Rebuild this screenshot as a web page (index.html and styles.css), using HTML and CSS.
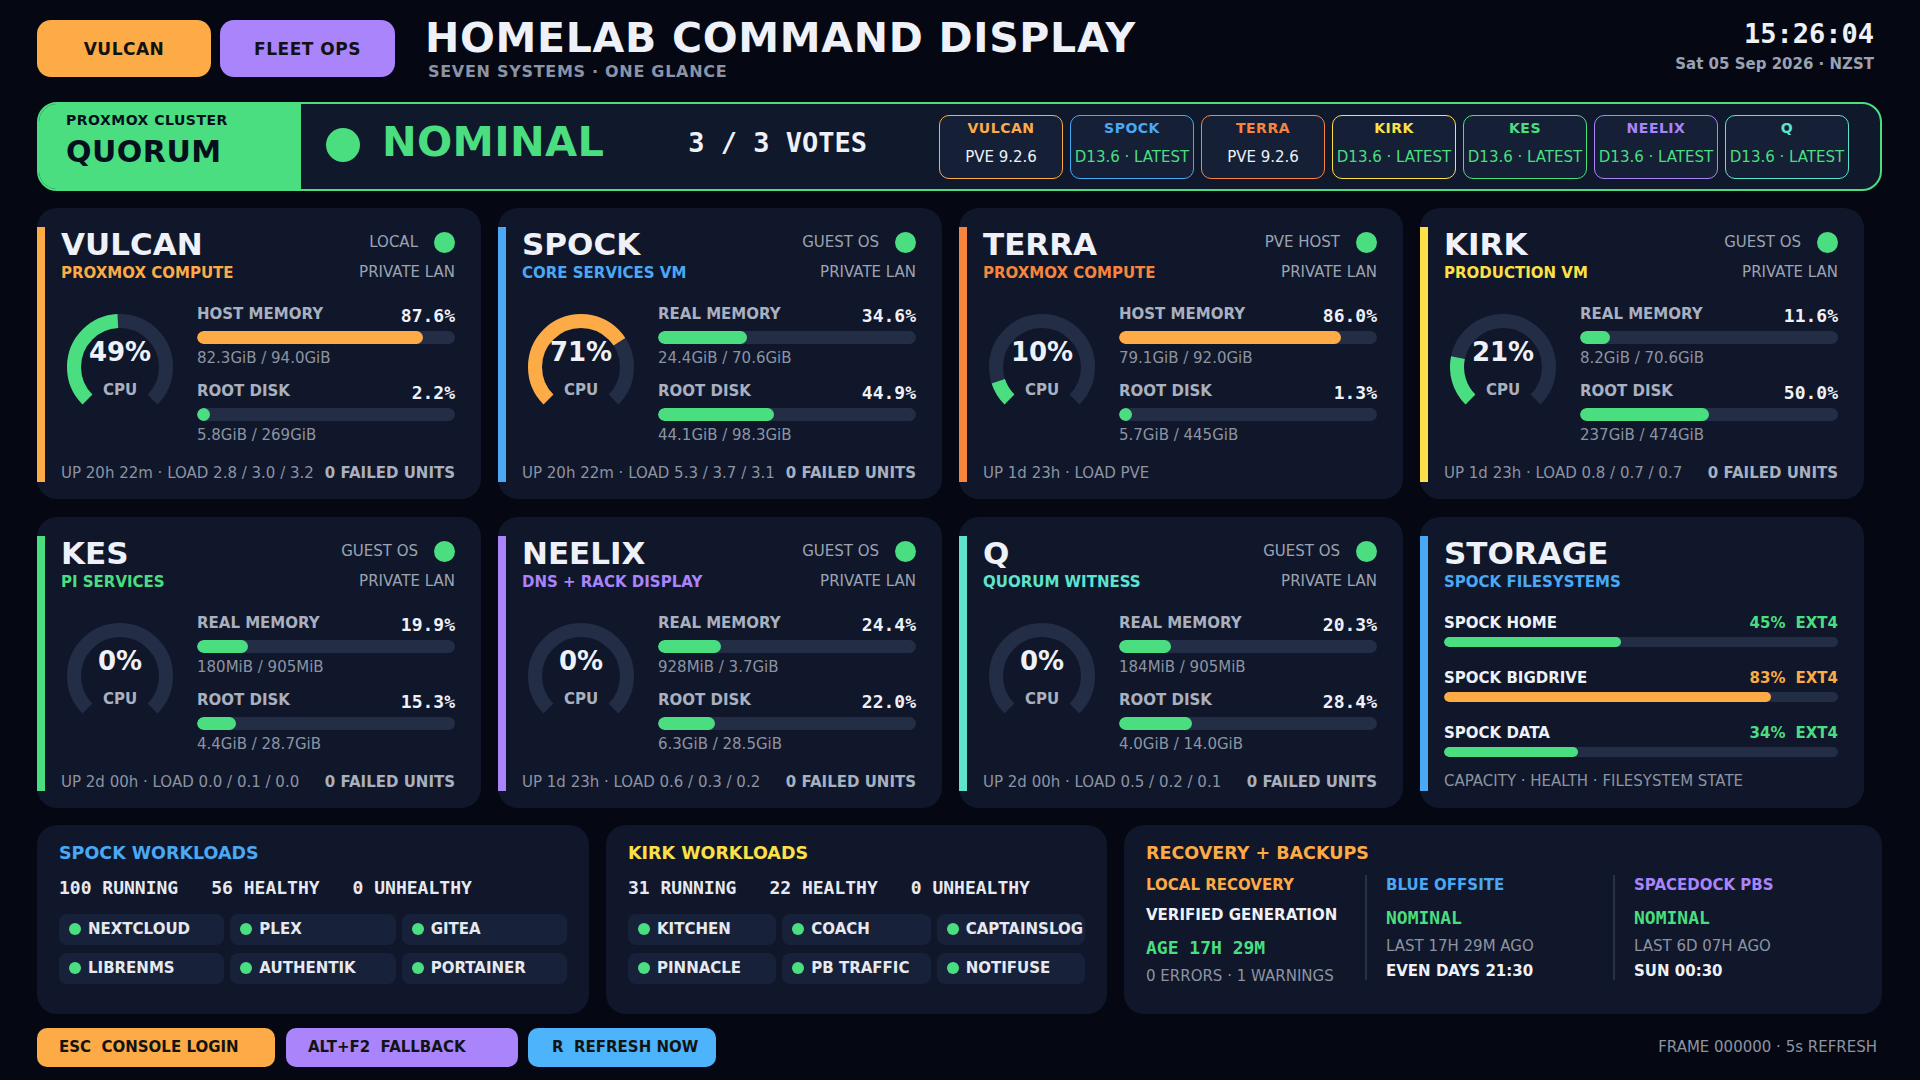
FILE: index.html
```html
<!DOCTYPE html>
<html lang="en">
<head>
<meta charset="utf-8">
<title>Homelab Command Display</title>
<link rel="stylesheet" href="styles.css">
</head>
<body>
<div class="page">
  <header class="top">
    <div class="modes">
      <span class="mode c-vulcan-bg">VULCAN</span>
      <span class="mode mode-wide c-purple-bg">FLEET OPS</span>
    </div>
    <div class="titles">
      <h1>HOMELAB COMMAND DISPLAY</h1>
      <div class="tagline">SEVEN SYSTEMS · ONE GLANCE</div>
    </div>
    <div class="clock">
      <div class="time">15:26:04</div>
      <div class="date">Sat 05 Sep 2026 · NZST</div>
    </div>
  </header>

  <section class="quorum">
    <div class="q-label">
      <div class="q-kicker">PROXMOX CLUSTER</div>
      <div class="q-big">QUORUM</div>
    </div>
    <span class="q-dot"></span>
    <span class="q-state">NOMINAL</span>
    <span class="q-votes">3 / 3 VOTES</span>
    <div class="q-badges">
      <div class="badge b-vulcan"><span class="b-name">VULCAN</span><span class="b-val">PVE 9.2.6</span></div>
      <div class="badge b-spock"><span class="b-name">SPOCK</span><span class="b-val ok">D13.6 · LATEST</span></div>
      <div class="badge b-terra"><span class="b-name">TERRA</span><span class="b-val">PVE 9.2.6</span></div>
      <div class="badge b-kirk"><span class="b-name">KIRK</span><span class="b-val ok">D13.6 · LATEST</span></div>
      <div class="badge b-kes"><span class="b-name">KES</span><span class="b-val ok">D13.6 · LATEST</span></div>
      <div class="badge b-neelix"><span class="b-name">NEELIX</span><span class="b-val ok">D13.6 · LATEST</span></div>
      <div class="badge b-q"><span class="b-name">Q</span><span class="b-val ok">D13.6 · LATEST</span></div>
    </div>
  </section>

  <section class="hosts">
    <!-- VULCAN -->
    <article class="card t-vulcan">
      <div class="accent"></div>
      <div class="card-body">
        <div class="card-head">
          <div><div class="card-title">VULCAN</div><div class="card-sub">PROXMOX COMPUTE</div></div>
          <div class="card-meta"><div class="meta-row"><span>LOCAL</span><span class="meta-dot"></span></div><div class="meta-net">PRIVATE LAN</div></div>
        </div>
        <div class="card-main">
          <div class="gauge-box">
            <svg class="gauge" viewBox="0 0 106 106" width="106" height="106">
              <path class="g-track" d="M20.47 85.53 A46 46 0 1 1 85.53 85.53" pathLength="100"/>
              <path class="g-fill ok" d="M20.47 85.53 A46 46 0 1 1 85.53 85.53" pathLength="100" stroke-dasharray="49 200"/>
              <text x="53" y="47" class="g-val">49%</text>
              <text x="53" y="81" class="g-lbl">CPU</text>
            </svg>
          </div>
          <div class="metrics">
            <div class="metric">
              <div class="m-row"><span class="m-label">HOST MEMORY</span><span class="m-pct">87.6%</span></div>
              <div class="bar"><div class="fill warn" style="width:87.6%"></div></div>
              <div class="m-sub">82.3GiB / 94.0GiB</div>
            </div>
            <div class="metric">
              <div class="m-row"><span class="m-label">ROOT DISK</span><span class="m-pct">2.2%</span></div>
              <div class="bar"><div class="fill ok" style="width:2.2%"></div></div>
              <div class="m-sub">5.8GiB / 269GiB</div>
            </div>
          </div>
        </div>
        <div class="card-foot"><span>UP 20h 22m · LOAD 2.8 / 3.0 / 3.2</span><b>0 FAILED UNITS</b></div>
      </div>
    </article>

    <!-- SPOCK -->
    <article class="card t-spock">
      <div class="accent"></div>
      <div class="card-body">
        <div class="card-head">
          <div><div class="card-title">SPOCK</div><div class="card-sub">CORE SERVICES VM</div></div>
          <div class="card-meta"><div class="meta-row"><span>GUEST OS</span><span class="meta-dot"></span></div><div class="meta-net">PRIVATE LAN</div></div>
        </div>
        <div class="card-main">
          <div class="gauge-box">
            <svg class="gauge" viewBox="0 0 106 106" width="106" height="106">
              <path class="g-track" d="M20.47 85.53 A46 46 0 1 1 85.53 85.53" pathLength="100"/>
              <path class="g-fill warn" d="M20.47 85.53 A46 46 0 1 1 85.53 85.53" pathLength="100" stroke-dasharray="71 200"/>
              <text x="53" y="47" class="g-val">71%</text>
              <text x="53" y="81" class="g-lbl">CPU</text>
            </svg>
          </div>
          <div class="metrics">
            <div class="metric">
              <div class="m-row"><span class="m-label">REAL MEMORY</span><span class="m-pct">34.6%</span></div>
              <div class="bar"><div class="fill ok" style="width:34.6%"></div></div>
              <div class="m-sub">24.4GiB / 70.6GiB</div>
            </div>
            <div class="metric">
              <div class="m-row"><span class="m-label">ROOT DISK</span><span class="m-pct">44.9%</span></div>
              <div class="bar"><div class="fill ok" style="width:44.9%"></div></div>
              <div class="m-sub">44.1GiB / 98.3GiB</div>
            </div>
          </div>
        </div>
        <div class="card-foot"><span>UP 20h 22m · LOAD 5.3 / 3.7 / 3.1</span><b>0 FAILED UNITS</b></div>
      </div>
    </article>

    <!-- TERRA -->
    <article class="card t-terra">
      <div class="accent"></div>
      <div class="card-body">
        <div class="card-head">
          <div><div class="card-title">TERRA</div><div class="card-sub">PROXMOX COMPUTE</div></div>
          <div class="card-meta"><div class="meta-row"><span>PVE HOST</span><span class="meta-dot"></span></div><div class="meta-net">PRIVATE LAN</div></div>
        </div>
        <div class="card-main">
          <div class="gauge-box">
            <svg class="gauge" viewBox="0 0 106 106" width="106" height="106">
              <path class="g-track" d="M20.47 85.53 A46 46 0 1 1 85.53 85.53" pathLength="100"/>
              <path class="g-fill ok" d="M20.47 85.53 A46 46 0 1 1 85.53 85.53" pathLength="100" stroke-dasharray="10 200"/>
              <text x="53" y="47" class="g-val">10%</text>
              <text x="53" y="81" class="g-lbl">CPU</text>
            </svg>
          </div>
          <div class="metrics">
            <div class="metric">
              <div class="m-row"><span class="m-label">HOST MEMORY</span><span class="m-pct">86.0%</span></div>
              <div class="bar"><div class="fill warn" style="width:86%"></div></div>
              <div class="m-sub">79.1GiB / 92.0GiB</div>
            </div>
            <div class="metric">
              <div class="m-row"><span class="m-label">ROOT DISK</span><span class="m-pct">1.3%</span></div>
              <div class="bar"><div class="fill ok" style="width:1.3%"></div></div>
              <div class="m-sub">5.7GiB / 445GiB</div>
            </div>
          </div>
        </div>
        <div class="card-foot"><span>UP 1d 23h · LOAD PVE</span></div>
      </div>
    </article>

    <!-- KIRK -->
    <article class="card t-kirk">
      <div class="accent"></div>
      <div class="card-body">
        <div class="card-head">
          <div><div class="card-title">KIRK</div><div class="card-sub">PRODUCTION VM</div></div>
          <div class="card-meta"><div class="meta-row"><span>GUEST OS</span><span class="meta-dot"></span></div><div class="meta-net">PRIVATE LAN</div></div>
        </div>
        <div class="card-main">
          <div class="gauge-box">
            <svg class="gauge" viewBox="0 0 106 106" width="106" height="106">
              <path class="g-track" d="M20.47 85.53 A46 46 0 1 1 85.53 85.53" pathLength="100"/>
              <path class="g-fill ok" d="M20.47 85.53 A46 46 0 1 1 85.53 85.53" pathLength="100" stroke-dasharray="21 200"/>
              <text x="53" y="47" class="g-val">21%</text>
              <text x="53" y="81" class="g-lbl">CPU</text>
            </svg>
          </div>
          <div class="metrics">
            <div class="metric">
              <div class="m-row"><span class="m-label">REAL MEMORY</span><span class="m-pct">11.6%</span></div>
              <div class="bar"><div class="fill ok" style="width:11.6%"></div></div>
              <div class="m-sub">8.2GiB / 70.6GiB</div>
            </div>
            <div class="metric">
              <div class="m-row"><span class="m-label">ROOT DISK</span><span class="m-pct">50.0%</span></div>
              <div class="bar"><div class="fill ok" style="width:50%"></div></div>
              <div class="m-sub">237GiB / 474GiB</div>
            </div>
          </div>
        </div>
        <div class="card-foot"><span>UP 1d 23h · LOAD 0.8 / 0.7 / 0.7</span><b>0 FAILED UNITS</b></div>
      </div>
    </article>

    <!-- KES -->
    <article class="card t-kes">
      <div class="accent"></div>
      <div class="card-body">
        <div class="card-head">
          <div><div class="card-title">KES</div><div class="card-sub">PI SERVICES</div></div>
          <div class="card-meta"><div class="meta-row"><span>GUEST OS</span><span class="meta-dot"></span></div><div class="meta-net">PRIVATE LAN</div></div>
        </div>
        <div class="card-main">
          <div class="gauge-box">
            <svg class="gauge" viewBox="0 0 106 106" width="106" height="106">
              <path class="g-track" d="M20.47 85.53 A46 46 0 1 1 85.53 85.53" pathLength="100"/>
              <text x="53" y="47" class="g-val">0%</text>
              <text x="53" y="81" class="g-lbl">CPU</text>
            </svg>
          </div>
          <div class="metrics">
            <div class="metric">
              <div class="m-row"><span class="m-label">REAL MEMORY</span><span class="m-pct">19.9%</span></div>
              <div class="bar"><div class="fill ok" style="width:19.9%"></div></div>
              <div class="m-sub">180MiB / 905MiB</div>
            </div>
            <div class="metric">
              <div class="m-row"><span class="m-label">ROOT DISK</span><span class="m-pct">15.3%</span></div>
              <div class="bar"><div class="fill ok" style="width:15.3%"></div></div>
              <div class="m-sub">4.4GiB / 28.7GiB</div>
            </div>
          </div>
        </div>
        <div class="card-foot"><span>UP 2d 00h · LOAD 0.0 / 0.1 / 0.0</span><b>0 FAILED UNITS</b></div>
      </div>
    </article>

    <!-- NEELIX -->
    <article class="card t-neelix">
      <div class="accent"></div>
      <div class="card-body">
        <div class="card-head">
          <div><div class="card-title">NEELIX</div><div class="card-sub">DNS + RACK DISPLAY</div></div>
          <div class="card-meta"><div class="meta-row"><span>GUEST OS</span><span class="meta-dot"></span></div><div class="meta-net">PRIVATE LAN</div></div>
        </div>
        <div class="card-main">
          <div class="gauge-box">
            <svg class="gauge" viewBox="0 0 106 106" width="106" height="106">
              <path class="g-track" d="M20.47 85.53 A46 46 0 1 1 85.53 85.53" pathLength="100"/>
              <text x="53" y="47" class="g-val">0%</text>
              <text x="53" y="81" class="g-lbl">CPU</text>
            </svg>
          </div>
          <div class="metrics">
            <div class="metric">
              <div class="m-row"><span class="m-label">REAL MEMORY</span><span class="m-pct">24.4%</span></div>
              <div class="bar"><div class="fill ok" style="width:24.4%"></div></div>
              <div class="m-sub">928MiB / 3.7GiB</div>
            </div>
            <div class="metric">
              <div class="m-row"><span class="m-label">ROOT DISK</span><span class="m-pct">22.0%</span></div>
              <div class="bar"><div class="fill ok" style="width:22%"></div></div>
              <div class="m-sub">6.3GiB / 28.5GiB</div>
            </div>
          </div>
        </div>
        <div class="card-foot"><span>UP 1d 23h · LOAD 0.6 / 0.3 / 0.2</span><b>0 FAILED UNITS</b></div>
      </div>
    </article>

    <!-- Q -->
    <article class="card t-q">
      <div class="accent"></div>
      <div class="card-body">
        <div class="card-head">
          <div><div class="card-title">Q</div><div class="card-sub">QUORUM WITNESS</div></div>
          <div class="card-meta"><div class="meta-row"><span>GUEST OS</span><span class="meta-dot"></span></div><div class="meta-net">PRIVATE LAN</div></div>
        </div>
        <div class="card-main">
          <div class="gauge-box">
            <svg class="gauge" viewBox="0 0 106 106" width="106" height="106">
              <path class="g-track" d="M20.47 85.53 A46 46 0 1 1 85.53 85.53" pathLength="100"/>
              <text x="53" y="47" class="g-val">0%</text>
              <text x="53" y="81" class="g-lbl">CPU</text>
            </svg>
          </div>
          <div class="metrics">
            <div class="metric">
              <div class="m-row"><span class="m-label">REAL MEMORY</span><span class="m-pct">20.3%</span></div>
              <div class="bar"><div class="fill ok" style="width:20.3%"></div></div>
              <div class="m-sub">184MiB / 905MiB</div>
            </div>
            <div class="metric">
              <div class="m-row"><span class="m-label">ROOT DISK</span><span class="m-pct">28.4%</span></div>
              <div class="bar"><div class="fill ok" style="width:28.4%"></div></div>
              <div class="m-sub">4.0GiB / 14.0GiB</div>
            </div>
          </div>
        </div>
        <div class="card-foot"><span>UP 2d 00h · LOAD 0.5 / 0.2 / 0.1</span><b>0 FAILED UNITS</b></div>
      </div>
    </article>

    <!-- STORAGE -->
    <article class="card t-spock">
      <div class="accent"></div>
      <div class="card-body">
        <div class="card-head">
          <div><div class="card-title">STORAGE</div><div class="card-sub">SPOCK FILESYSTEMS</div></div>
        </div>
        <div class="store-list">
          <div class="store-row">
            <div class="s-head"><span>SPOCK HOME</span><span class="s-pct c-ok"><span>45%</span><span>EXT4</span></span></div>
            <div class="s-bar"><div class="fill ok" style="width:45%"></div></div>
          </div>
          <div class="store-row">
            <div class="s-head"><span>SPOCK BIGDRIVE</span><span class="s-pct c-warn"><span>83%</span><span>EXT4</span></span></div>
            <div class="s-bar"><div class="fill warn" style="width:83%"></div></div>
          </div>
          <div class="store-row">
            <div class="s-head"><span>SPOCK DATA</span><span class="s-pct c-ok"><span>34%</span><span>EXT4</span></span></div>
            <div class="s-bar"><div class="fill ok" style="width:34%"></div></div>
          </div>
        </div>
        <div class="store-foot">CAPACITY · HEALTH · FILESYSTEM STATE</div>
      </div>
    </article>
  </section>

  <section class="lower">
    <div class="panel">
      <div class="p-title c-spock">SPOCK WORKLOADS</div>
      <div class="p-stats"><span>100 RUNNING</span><span>56 HEALTHY</span><span>0 UNHEALTHY</span></div>
      <div class="chips">
        <div class="chip"><span class="chip-dot"></span>NEXTCLOUD</div>
        <div class="chip"><span class="chip-dot"></span>PLEX</div>
        <div class="chip"><span class="chip-dot"></span>GITEA</div>
        <div class="chip"><span class="chip-dot"></span>LIBRENMS</div>
        <div class="chip"><span class="chip-dot"></span>AUTHENTIK</div>
        <div class="chip"><span class="chip-dot"></span>PORTAINER</div>
      </div>
    </div>
    <div class="panel">
      <div class="p-title c-kirk">KIRK WORKLOADS</div>
      <div class="p-stats"><span>31 RUNNING</span><span>22 HEALTHY</span><span>0 UNHEALTHY</span></div>
      <div class="chips">
        <div class="chip"><span class="chip-dot"></span>KITCHEN</div>
        <div class="chip"><span class="chip-dot"></span>COACH</div>
        <div class="chip"><span class="chip-dot"></span>CAPTAINSLOG</div>
        <div class="chip"><span class="chip-dot"></span>PINNACLE</div>
        <div class="chip"><span class="chip-dot"></span>PB TRAFFIC</div>
        <div class="chip"><span class="chip-dot"></span>NOTIFUSE</div>
      </div>
    </div>
    <div class="panel">
      <div class="p-title c-vulcan">RECOVERY + BACKUPS</div>
      <div class="rec-cols">
        <div class="rec-col">
          <div class="rec-h c-vulcan">LOCAL RECOVERY</div>
          <div class="rec-strong r1">VERIFIED GENERATION</div>
          <div class="rec-mono r2">AGE 17H 29M</div>
          <div class="rec-dim r3">0 ERRORS · 1 WARNINGS</div>
        </div>
        <div class="rec-col">
          <div class="rec-h c-spock">BLUE OFFSITE</div>
          <div class="rec-mono r1m">NOMINAL</div>
          <div class="rec-dim r2d">LAST 17H 29M AGO</div>
          <div class="rec-strong r3s">EVEN DAYS 21:30</div>
        </div>
        <div class="rec-col">
          <div class="rec-h c-purple">SPACEDOCK PBS</div>
          <div class="rec-mono r1m">NOMINAL</div>
          <div class="rec-dim r2d">LAST 6D 07H AGO</div>
          <div class="rec-strong r3s">SUN 00:30</div>
        </div>
      </div>
    </div>
  </section>

  <footer class="keys">
    <span class="key k-esc c-vulcan-bg">ESC  CONSOLE LOGIN</span>
    <span class="key k-alt c-purple-bg">ALT+F2  FALLBACK</span>
    <span class="key k-r c-blue-bg">R  REFRESH NOW</span>
    <span class="frame">FRAME 000000 · 5s REFRESH</span>
  </footer>
</div>
</body>
</html>
```

FILE: styles.css
```css
:root {
  --bg: #050812;
  --panel: #10172a;
  --chip: #18213a;
  --track: #242d46;
  --green: #4ade80;
  --orange: #fcab46;
  --blue: #4aa8f5;
  --terra: #f7853e;
  --yellow: #fde047;
  --purple: #a984fa;
  --teal: #5ee3cf;
  --white: #eef1f8;
  --dim: #a9b0bf;
  --muted: #8c93a3;
  --sans: "DejaVu Sans", "Noto Sans", sans-serif;
  --mono: "DejaVu Sans Mono", "Liberation Mono", monospace;
}

html, body {
  margin: 0;
  background: var(--bg);
}

body {
  font-family: var(--sans);
  color: var(--white);
}

.page {
  width: 1920px;
  height: 1080px;
  box-sizing: border-box;
  padding: 14px 38px 0 37px;
  overflow: hidden;
}

/* colour helpers */
.c-vulcan { color: var(--orange); }
.c-spock { color: var(--blue); }
.c-kirk { color: var(--yellow); }
.c-purple { color: var(--purple); }
.c-ok { color: var(--green); }
.c-warn { color: var(--orange); }
.c-vulcan-bg { background: var(--orange); }
.c-purple-bg { background: var(--purple); }
.c-blue-bg { background: #4db3fa; }

/* header */
.top {
  height: 88px;
  display: flex;
  align-items: flex-start;
}

.modes {
  display: flex;
  gap: 9px;
  margin-top: 6px;
}

.mode {
  width: 174px;
  height: 57px;
  border-radius: 14px;
  display: flex;
  align-items: center;
  justify-content: center;
  font-size: 17px;
  font-weight: 700;
  letter-spacing: 0.5px;
  color: #121212;
}

.mode-wide { width: 175px; }

.titles { margin-left: 30px; }

h1 {
  margin: 0;
  font-size: 41px;
  line-height: normal;
  font-weight: 700;
  letter-spacing: 0.7px;
  color: var(--white);
}

.tagline {
  margin-left: 3px;
  font-size: 16px;
  font-weight: 700;
  letter-spacing: 0.7px;
  color: #8b93a7;
}

.clock {
  margin-left: auto;
  margin-right: 8px;
  margin-top: 3.5px;
  text-align: right;
}

.time {
  font-family: var(--mono);
  font-size: 27px;
  font-weight: 700;
  color: var(--white);
}

.date {
  margin-top: 6px;
  font-size: 15px;
  font-weight: 700;
  color: #9aa1b2;
}

/* quorum strip */
.quorum {
  height: 89px;
  box-sizing: border-box;
  border: 2px solid var(--green);
  border-radius: 20px;
  overflow: hidden;
  display: flex;
  align-items: center;
  background: #10182b;
}

.q-label {
  align-self: stretch;
  width: 262px;
  flex: none;
  box-sizing: border-box;
  padding: 8px 0 0 27px;
  background: var(--green);
  color: #06101c;
}

.q-kicker {
  font-size: 14px;
  font-weight: 700;
  letter-spacing: 0.5px;
}

.q-big {
  margin-top: 6px;
  font-size: 30px;
  font-weight: 700;
  letter-spacing: 0.5px;
}

.q-dot {
  width: 34px;
  height: 34px;
  flex: none;
  border-radius: 50%;
  background: var(--green);
  margin-left: 25px;
  margin-bottom: 4px;
}

.q-state {
  margin-left: 22px;
  margin-bottom: 10px;
  font-size: 41.5px;
  font-weight: 700;
  letter-spacing: 0.3px;
  color: var(--green);
}

.q-votes {
  margin-left: 84px;
  margin-bottom: 9px;
  font-family: var(--mono);
  font-size: 27px;
  font-weight: 700;
  color: var(--white);
}

.q-badges {
  margin-left: auto;
  margin-right: 31px;
  display: flex;
  gap: 7px;
}

.badge {
  width: 124px;
  height: 64px;
  box-sizing: border-box;
  border: 1.5px solid;
  border-radius: 10px;
  background: #152036;
  display: flex;
  flex-direction: column;
  align-items: center;
  padding-top: 4.5px;
  white-space: nowrap;
}

.b-name {
  font-size: 14px;
  font-weight: 700;
  letter-spacing: 0.5px;
}

.b-val {
  margin-top: 12px;
  font-size: 15px;
  color: var(--white);
}

.b-val.ok { color: var(--green); }

.b-vulcan { border-color: var(--orange); color: var(--orange); }
.b-spock { border-color: var(--blue); color: var(--blue); }
.b-terra { border-color: var(--terra); color: var(--terra); }
.b-kirk { border-color: var(--yellow); color: var(--yellow); }
.b-kes { border-color: var(--green); color: var(--green); }
.b-neelix { border-color: var(--purple); color: var(--purple); }
.b-q { border-color: var(--teal); color: var(--teal); }

/* host cards */
.hosts {
  display: grid;
  grid-template-columns: repeat(4, 444px);
  column-gap: 17px;
  row-gap: 18.5px;
  margin-top: 17px;
}

.card {
  background: var(--panel);
  border-radius: 20px;
  padding: 19px 26px 17px 0;
  display: flex;
}

.accent {
  width: 8px;
  flex: none;
  margin-right: 16px;
  background: var(--tone);
}

.t-vulcan { --tone: var(--orange); }
.t-spock { --tone: var(--blue); }
.t-terra { --tone: var(--terra); }
.t-kirk { --tone: var(--yellow); }
.t-kes { --tone: var(--green); }
.t-neelix { --tone: var(--purple); }
.t-q { --tone: var(--teal); }

.card-body {
  flex: 1;
  min-width: 0;
  display: flex;
  flex-direction: column;
}

.card-head {
  display: flex;
  justify-content: space-between;
  align-items: flex-start;
}

.card-title {
  font-size: 31px;
  font-weight: 700;
  line-height: 35px;
  color: var(--white);
}

.card-sub {
  margin-top: 3px;
  font-size: 15px;
  line-height: 17px;
  font-weight: 700;
  color: var(--tone);
}

.card-meta {
  margin-top: 5px;
  text-align: right;
  font-size: 15px;
  line-height: 17px;
  color: #9ca3b3;
}

.meta-row {
  height: 21px;
  display: flex;
  align-items: center;
  justify-content: flex-end;
  gap: 16px;
}

.meta-dot {
  width: 21px;
  height: 21px;
  border-radius: 50%;
  background: var(--green);
}

.meta-net { margin-top: 11px; }

.card-main {
  display: flex;
  margin-top: 21.5px;
}

.gauge-box {
  width: 118px;
  flex: none;
  margin-right: 18px;
}

.gauge {
  display: block;
  margin: 10px 0 0 6px;
}

.g-track,
.g-fill {
  fill: none;
  stroke-width: 14;
  stroke-linecap: butt;
}

.g-track { stroke: var(--track); }
.g-fill.ok { stroke: var(--green); }
.g-fill.warn { stroke: var(--orange); }

.g-val {
  font-family: var(--sans);
  font-size: 26px;
  font-weight: 700;
  fill: var(--white);
  text-anchor: middle;
}

.g-lbl {
  font-family: var(--sans);
  font-size: 15px;
  font-weight: 700;
  fill: var(--dim);
  text-anchor: middle;
}

.metrics { flex: 1; min-width: 0; }

.metric + .metric { margin-top: 14px; }

.m-row {
  height: 21px;
  display: flex;
  justify-content: space-between;
  align-items: center;
}

.m-label {
  font-size: 15px;
  line-height: 17px;
  font-weight: 700;
  color: var(--dim);
}

.m-pct {
  margin-top: 3px;
  font-family: var(--mono);
  font-size: 18px;
  line-height: 21px;
  font-weight: 700;
  color: var(--white);
}

.bar {
  margin-top: 6px;
  height: 13px;
  border-radius: 7px;
  background: var(--track);
  overflow: hidden;
}

.fill {
  height: 100%;
  min-width: 13px;
  border-radius: 7px;
}

.fill.ok { background: var(--green); }
.fill.warn { background: var(--orange); }

.m-sub {
  margin-top: 6px;
  font-size: 15px;
  line-height: 17px;
  color: var(--muted);
}

.card-foot {
  margin-top: 21px;
  display: flex;
  justify-content: space-between;
  font-size: 15px;
  line-height: 17px;
  color: var(--muted);
  white-space: nowrap;
}

.card-foot b {
  font-weight: 700;
  color: var(--dim);
}

/* storage */
.store-list { margin-top: 24px; }

.store-row + .store-row { margin-top: 23px; }

.s-head {
  display: flex;
  justify-content: space-between;
  font-size: 15px;
  line-height: 17px;
  font-weight: 700;
  color: var(--white);
}

.s-pct {
  display: flex;
  gap: 10px;
}

.s-bar {
  margin-top: 5px;
  height: 10px;
  border-radius: 5px;
  background: var(--track);
  overflow: hidden;
}

.s-bar .fill { border-radius: 5px; }

.store-foot {
  margin-top: 16px;
  font-size: 15px;
  line-height: 17px;
  color: var(--muted);
}

/* lower panels */
.lower {
  display: grid;
  grid-template-columns: 552px 501px 1fr;
  gap: 17px;
  margin-top: 17px;
  height: 189px;
}

.panel {
  background: var(--panel);
  border-radius: 20px;
  padding: 18px 22px;
  box-sizing: border-box;
}

.p-title {
  font-size: 17.5px;
  font-weight: 700;
}

.p-stats {
  margin-top: 14.5px;
  display: flex;
  gap: 33px;
  font-family: var(--mono);
  font-size: 18px;
  font-weight: 700;
  color: #e6e9f0;
  white-space: nowrap;
}

.chips {
  margin-top: 15.5px;
  display: grid;
  grid-template-columns: repeat(3, 1fr);
  column-gap: 6px;
  row-gap: 8px;
}

.chip {
  height: 31px;
  border-radius: 8px;
  background: var(--chip);
  display: flex;
  align-items: center;
  gap: 7px;
  padding-left: 10px;
  font-size: 15px;
  font-weight: 700;
  color: #e6e9f0;
  white-space: nowrap;
}

.chip-dot {
  width: 12px;
  height: 12px;
  flex: none;
  border-radius: 50%;
  background: var(--green);
}

.rec-cols {
  margin-top: 12px;
  display: grid;
  grid-template-columns: 198px 227px 1fr;
  column-gap: 21px;
  align-items: start;
}

.rec-col { padding-top: 1px; white-space: nowrap; }

.rec-col + .rec-col {
  border-left: 2px solid #27314a;
  padding-left: 19px;
}

.rec-h {
  font-size: 15px;
  font-weight: 700;
}

.rec-strong {
  font-size: 15px;
  font-weight: 700;
  color: var(--white);
}

.rec-mono {
  font-family: var(--mono);
  font-size: 18px;
  font-weight: 700;
  color: var(--green);
}

.rec-dim {
  font-size: 15px;
  color: var(--muted);
}

.r1 { margin-top: 12.5px; }
.r2 { margin-top: 13px; }
.r3 { margin-top: 8.5px; }
.r1m { margin-top: 13px; }
.r2d { margin-top: 9.5px; }
.r3s { margin-top: 6.5px; }

/* footer keys */
.keys {
  margin-top: 14px;
  height: 39px;
  display: flex;
  align-items: center;
}

.key {
  height: 39px;
  box-sizing: border-box;
  border-radius: 10px;
  display: flex;
  align-items: center;
  padding-left: 22px;
  font-size: 15px;
  font-weight: 700;
  color: #131313;
  white-space: pre;
}

.k-esc { width: 238px; }
.k-alt { width: 232px; margin-left: 11px; }
.k-r { width: 188px; margin-left: 10px; padding-left: 24px; }

.frame {
  margin-left: auto;
  margin-right: 5px;
  font-size: 15px;
  color: var(--muted);
}
```
